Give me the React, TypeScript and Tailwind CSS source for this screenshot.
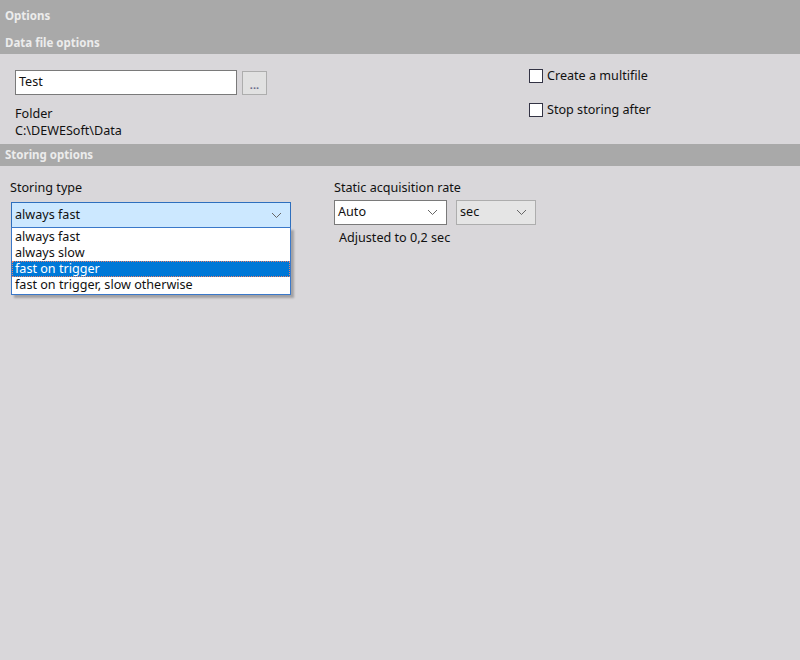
const OPTIONS = [
  "always fast",
  "always slow",
  "fast on trigger",
  "fast on trigger, slow otherwise",
];

function Chevron() {
  return (
    <svg width="11" height="7" viewBox="0 0 11 7" className="shrink-0">
      <path d="M1 1l4.5 4.5L10 1" fill="none" stroke="#666" strokeWidth="1" />
    </svg>
  );
}

function Checkbox({ label }: { label: string }) {
  return (
    <label className="flex items-center gap-[4px] h-[16px]">
      <span className="w-[14px] h-[14px] bg-white border border-[#333344]" />
      <span>{label}</span>
    </label>
  );
}

export default function App() {
  const selected = 2;

  return (
    <main
      className="w-[800px] h-[660px] bg-[#d9d7da] text-[12.6px] text-[#111] overflow-hidden"
      style={{ fontFamily: '"Noto Sans", "Open Sans", sans-serif' }}
    >
      {/* HEADER */}
      <div className="bg-[#a9a9a9] text-[#ececec] font-bold text-[11.5px]">
        <div className="h-[32px] flex items-center pl-[5px]">Options</div>
        <div className="h-[22px] flex items-center pl-[5px]">Data file options</div>
      </div>

      {/* DATA FILE */}
      <div className="flex h-[90px]">
        <div className="pl-[15px] pt-[16px] w-[529px]">
          <div className="flex items-center gap-[5px]">
            <div className="w-[222px] h-[25px] bg-white border border-[#7a7a7a] flex items-center px-[3px]">
              Test
            </div>
            <button className="w-[25px] h-[24px] bg-[#e1e1e1] border border-[#adadad] text-[11px] leading-none pt-[4px] text-[#6b6b8a] font-bold">
              ...
            </button>
          </div>
          <div className="mt-[10px] leading-[17px]">
            <div>Folder</div>
            <div>C:\DEWESoft\Data</div>
          </div>
        </div>
        <div className="pt-[14px] flex flex-col gap-[18px]">
          <Checkbox label="Create a multifile" />
          <Checkbox label="Stop storing after" />
        </div>
      </div>

      {/* STORING */}
      <div className="bg-[#a9a9a9] text-[#ececec] font-bold text-[11.5px] h-[22px] flex items-center pl-[5px]">
        Storing options
      </div>

      <div className="flex pt-[13px]">
        <div className="pl-[11px] w-[334px]">
          <div className="mb-[6px] leading-[17px] -ml-[1px]">Storing type</div>
          <div className="relative w-[280px]">
            <div className="h-[26px] bg-[#cce8ff] border border-[#2e6fbd] flex items-center justify-between pl-[3px] pr-[8px]">
              <span>always fast</span>
              <Chevron />
            </div>
            <div className="absolute left-0 top-[25px] w-[280px] bg-white border border-[#3a78c9] shadow-[3px_3px_2px_rgba(0,0,0,0.25)] py-[1px]">
              {OPTIONS.map((o, i) => (
                <div
                  key={o}
                  className={
                    i === selected
                      ? "h-[16px] leading-[14px] px-[2px] overflow-hidden bg-[#0078d7] text-white border border-dotted border-[#e8806a]"
                      : "h-[16px] leading-[16px] px-[3px] overflow-hidden"
                  }
                >
                  {o}
                </div>
              ))}
            </div>
          </div>
        </div>

        <div>
          <div className="mb-[4px] leading-[17px]">Static acquisition rate</div>
          <div className="flex gap-[9px]">
            <div className="w-[113px] h-[25px] bg-white border border-[#7a7a7a] flex items-center justify-between pl-[3px] pr-[8px]">
              <span>Auto</span>
              <Chevron />
            </div>
            <div className="w-[80px] h-[25px] bg-[#e5e5e5] border border-[#adadad] flex items-center justify-between pl-[3px] pr-[8px]">
              <span>sec</span>
              <Chevron />
            </div>
          </div>
          <div className="pl-[5px] mt-[4px] leading-[17px]">Adjusted to 0,2 sec</div>
        </div>
      </div>
    </main>
  );
}
